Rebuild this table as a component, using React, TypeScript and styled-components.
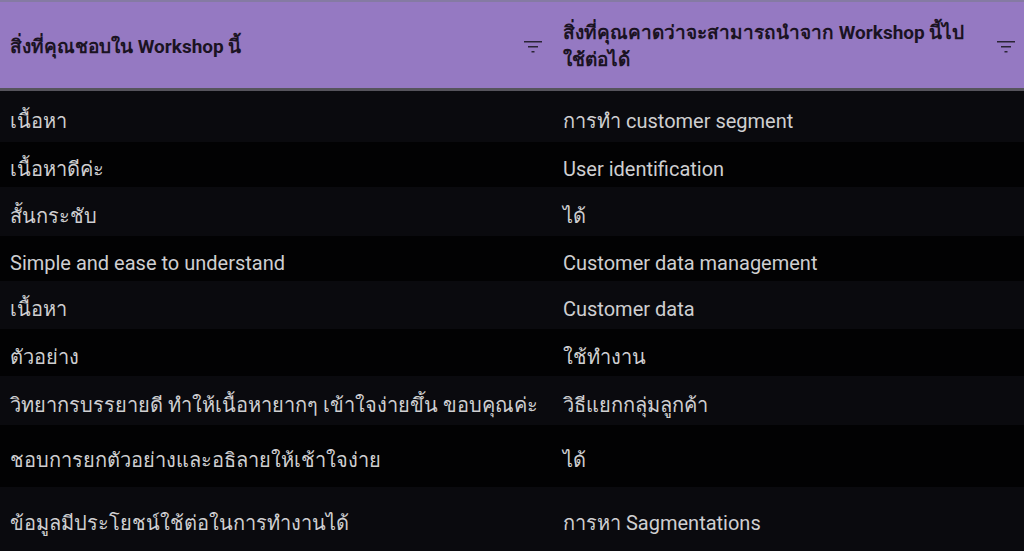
import styled, { createGlobalStyle } from "styled-components";

const GlobalStyle = createGlobalStyle`
  html, body {
    margin: 0;
    padding: 0;
    background: #020203;
  }
  body {
    font-family: Roboto, "Noto Sans", "DejaVu Sans", sans-serif;
    overflow: hidden;
  }
`;

const Table = styled.div`
  width: 1024px;
  height: 551px;
  overflow: hidden;
  display: flex;
  flex-direction: column;
`;

const HeaderRow = styled.div`
  display: grid;
  grid-template-columns: 550px 1fr;
  height: 89px;
  background: #9579c2;
  border-top: 2px solid #857aa3;
  border-bottom: 3px solid #56545c;
`;

const HeaderCell = styled.div<{ $left: number; $right: number }>`
  display: flex;
  align-items: center;
  justify-content: space-between;
  padding: 2px ${(p) => p.$right}px 0 ${(p) => p.$left}px;
  gap: 16px;
`;

const HeaderTitle = styled.span`
  font-size: 19px;
  font-weight: 700;
  line-height: 27px;
  color: #1b1322;
`;

const FilterButton = styled.span`
  display: inline-flex;
  width: 24px;
  height: 24px;
  align-items: center;
  justify-content: center;
  flex-shrink: 0;
  color: #2a2435;
`;

const Row = styled.div<{ $h: number; $odd: boolean }>`
  display: grid;
  grid-template-columns: 550px 1fr;
  height: ${(p) => p.$h}px;
  flex-shrink: 0;
  background: ${(p) => (p.$odd ? "#0a0a0e" : "#020203")};
`;

const Cell = styled.div`
  display: flex;
  align-items: center;
  padding: 8px 10px 0;
  font-size: 20px;
  color: #cfcfd1;
  white-space: nowrap;
`;

const SecondCell = styled(Cell)`
  padding-left: 13px;
`;

const FilterIcon = () => (
  <svg width="18" height="14" viewBox="0 0 18 14" fill="none">
    <rect x="0" y="2" width="18" height="1.5" fill="currentColor" />
    <rect x="4" y="7" width="10" height="1.5" fill="currentColor" />
    <rect x="7.5" y="12" width="3" height="1.5" fill="currentColor" />
  </svg>
);

const rows: [string, string, number][] = [
  ["เนื้อหา", "การทำ customer segment", 51],
  ["เนื้อหาดีค่ะ", "User identification", 45],
  ["สั้นกระชับ", "ได้", 49],
  ["Simple and ease to understand", "Customer data management", 45],
  ["เนื้อหา", "Customer data", 48],
  ["ตัวอย่าง", "ใช้ทำงาน", 47],
  ["วิทยากรบรรยายดี ทำให้เนื้อหายากๆ เข้าใจง่ายขึ้น ขอบคุณค่ะ", "วิธีแยกกลุ่มลูกค้า", 49],
  ["ชอบการยกตัวอย่างและอธิลายให้เช้าใจง่าย", "ได้", 62],
  ["ข้อมูลมีประโยชน์ใช้ต่อในการทำงานได้", "การหา Sagmentations", 64],
];

export default function App() {
  return (
    <>
      <GlobalStyle />
      <Table>
        <HeaderRow>
          <HeaderCell $left={10} $right={5}>
            <HeaderTitle>สิ่งที่คุณชอบใน Workshop นี้</HeaderTitle>
            <FilterButton>
              <FilterIcon />
            </FilterButton>
          </HeaderCell>
          <HeaderCell $left={13} $right={6}>
            <HeaderTitle>
              สิ่งที่คุณคาดว่าจะสามารถนำจาก Workshop นี้ไป
              <br />
              ใช้ต่อได้
            </HeaderTitle>
            <FilterButton>
              <FilterIcon />
            </FilterButton>
          </HeaderCell>
        </HeaderRow>
        {rows.map(([a, b, h], i) => (
          <Row key={i} $h={h} $odd={i % 2 === 0}>
            <Cell>{a}</Cell>
            <SecondCell>{b}</SecondCell>
          </Row>
        ))}
      </Table>
    </>
  );
}
